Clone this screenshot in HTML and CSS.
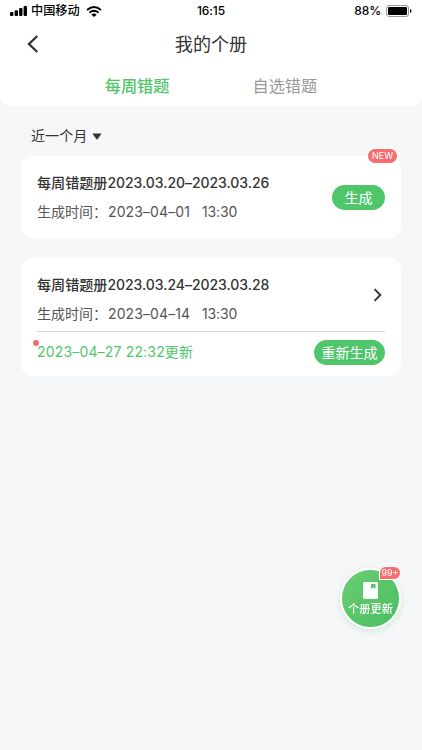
FILE: index.html
```html
<!DOCTYPE html>
<html lang="zh-CN">
<head>
<meta charset="utf-8">
<meta name="viewport" content="width=device-width, initial-scale=1">
<title>我的个册</title>
<link rel="stylesheet" href="styles.css">
</head>
<body>
<header class="header">
  <div class="status">
    <div class="carrier">
      <svg class="signal" viewBox="0 0 17 10"><rect x="0" y="6" width="3.4" height="4" rx="1"/><rect x="4.6" y="4.2" width="3.4" height="5.8" rx="1"/><rect x="9.1" y="2.1" width="3.4" height="7.9" rx="1"/><rect x="13.6" y="0" width="3.4" height="10" rx="1"/></svg>
      <span class="operator">中国移动</span>
      <svg class="wifi" viewBox="0 0 16 11"><path d="M1 4Q8-2 15 4M3.4 6.6Q8 2.8 12.6 6.6" fill="none" stroke="#000" stroke-width="1.8"/><path d="M5.3 8.4Q8 6.4 10.7 8.4L8 11Z"/></svg>
    </div>
    <span class="clock">16:15</span>
    <div class="power"><span class="percent">88%</span>
      <svg class="battery" viewBox="0 0 26 12"><rect x=".5" y=".5" width="22" height="11" rx="2.5" fill="#fff" stroke="#999"/><rect x="2" y="2" width="19" height="8" rx="1"/><path d="M24 4Q25.6 4.3 25.6 6T24 8Z"/></svg>
    </div>
  </div>
  <div class="navbar">
    <svg class="back" viewBox="0 0 12 18"><path d="M10.3 1L2 9L10.3 17"/></svg>
    <h1 class="page-title">我的个册</h1>
  </div>
  <nav class="tabs"><span class="tab tab-active">每周错题</span><span class="tab">自选错题</span></nav>
</header>
<main class="content">
  <div class="filter">近一个月<svg class="caret" viewBox="0 0 10 7"><path d="M1.3 1H8.7L5 5.8Z"/></svg></div>
  <section class="card card-new">
    <span class="badge-new">NEW</span>
    <div class="info">
      <h2 class="card-title">每周错题册<span class="title-range">2023.03.20–2023.03.26</span></h2>
      <p class="meta"><span class="label">生成时间：</span><span class="date">2023–04–01</span><span class="time">13:30</span></p>
    </div>
    <button class="button">生成</button>
  </section>
  <section class="card card-updated">
    <div class="summary">
      <div class="info">
        <h2 class="card-title">每周错题册<span class="title-range">2023.03.24–2023.03.28</span></h2>
        <p class="meta"><span class="label">生成时间：</span><span class="date">2023–04–14</span><span class="time">13:30</span></p>
      </div>
      <svg class="chevron" viewBox="0 0 9 14"><path d="M1.5 1.2L7.3 7L1.5 12.8"/></svg>
    </div>
    <div class="update"><span class="update-text">2023–04–27 22:32更新</span><button class="button button-wide">重新生成</button></div>
  </section>
</main>
<div class="fab">
  <span class="fab-badge">99+</span>
  <svg class="book" viewBox="0 0 15 17"><rect width="15" height="17" rx="1.5" fill="#fff"/><path d="M8 2H12.5V7L10.2 5.3L8 7Z" fill="#50c66b"/></svg>
  <span class="fab-label">个册更新</span>
</div>
</body>
</html>
```
FILE: styles.css
```css
* { box-sizing: border-box; }
body {
  margin: 0;
  min-height: 750px;
  background: #f6f7f9;
  color: #333;
  font-family: Inter, "Noto Sans CJK SC", sans-serif;
}
h1, h2, p { margin: 0; font-weight: 400; }
svg { display: block; flex: none; }
button { border: 0; padding: 0; font-family: inherit; }
.header { height: 106px; background: #fff; border-radius: 0 0 12px 12px; }
.status {
  display: grid;
  grid-template-columns: 1fr auto 1fr;
  align-items: center;
  height: 22px;
  padding: 0 10px;
  color: #000;
  font-size: 12px;
  line-height: 22px;
}
.carrier, .power { display: flex; align-items: center; }
.power { justify-content: flex-end; gap: 5px; }
.signal { width: 17px; height: 10px; }
.operator { margin-left: 4px; font-size: 12.2px; font-weight: 500; }
.wifi { width: 16px; height: 11px; margin-left: 6px; }
.clock { font-weight: 500; font-size: 12px; letter-spacing: -.1px; }
.percent { font-weight: 500; font-size: 12px; letter-spacing: -.1px; }
.battery { width: 26px; height: 12px; }
.navbar {
  display: grid;
  grid-template-columns: 1fr auto 1fr;
  align-items: center;
  height: 43px;
  padding: 0 27px;
}
.back { width: 12px; height: 18px; fill: none; stroke: #333; stroke-width: 2.3; }
.page-title { font-size: 18.1px; line-height: 26px; }
.tabs { display: flex; justify-content: center; gap: 83px; height: 41px; padding-top: 9px; }
.tab { color: #999; font-size: 16.2px; line-height: 24px; }
.tab-active { color: #50c66b; font-weight: 500; }
.content { padding: 20px 21px; }
.filter {
  display: flex;
  align-items: center;
  gap: 5px;
  height: 20px;
  margin-left: 10px;
  font-size: 14.1px;
  line-height: 20px;
}
.caret { width: 10px; height: 7px; fill: #333; stroke: #333; stroke-width: 1.2; stroke-linejoin: round; }
.card { position: relative; width: 380px; background: #fff; border-radius: 12px; padding: 0 16px; }
.card-new {
  display: flex;
  align-items: center;
  justify-content: space-between;
  height: 82px;
  margin-top: 10px;
}
.card-updated { height: 118px; margin-top: 20px; }
.summary {
  display: flex;
  align-items: flex-start;
  justify-content: space-between;
  height: 74px;
  padding: 17px 3px 0 0;
  border-bottom: 1px solid #d9d9d9;
}
.card-title { font-size: 14.1px; font-weight: 500; line-height: 20px; white-space: nowrap; }
.title-range { font-size: 14px; letter-spacing: -.05px; }
.meta { display: flex; margin-top: 9px; color: #555; font-size: 14px; line-height: 20px; }
.label { width: 71px; }
.date { width: 94px; letter-spacing: .1px; }
.time { letter-spacing: -.15px; }
.button {
  width: 53px;
  height: 25px;
  border-radius: 13px;
  background: #50c66b;
  color: #fff;
  font-size: 14.1px;
  line-height: 25px;
}
.button-wide { width: 71px; margin-bottom: 1px; }
.chevron { width: 9px; height: 14px; margin-top: 13px; fill: none; stroke: #333; stroke-width: 1.9; }
.badge-new {
  position: absolute;
  top: -7px;
  right: 4px;
  width: 29px;
  height: 14px;
  border-radius: 7px;
  background: #f56d6c;
  color: #fff;
  font-size: 9px;
  line-height: 14px;
  text-align: center;
}
.update { position: relative; display: flex; align-items: center; justify-content: space-between; height: 41px; }
.update::before {
  content: "";
  position: absolute;
  left: -4px;
  top: 8px;
  width: 6px;
  height: 6px;
  border-radius: 50%;
  background: #f56d6c;
}
.update-text { margin-bottom: 2px; color: #50c66b; font-size: 14px; line-height: 20px; letter-spacing: .17px; }
.fab {
  position: fixed;
  left: 340px;
  top: 568px;
  width: 61px;
  height: 61px;
  border: 2px solid #fff;
  border-radius: 50%;
  background: linear-gradient(135deg, #6ace72, #49be60);
  box-shadow: 0 2px 6px #50c66b40;
  display: flex;
  flex-direction: column;
  align-items: center;
  padding-top: 12px;
}
.book { width: 15px; height: 17px; }
.fab-label { margin-top: 1px; color: #fff; font-size: 11.2px; font-weight: 500; line-height: 18px; white-space: nowrap; }
.fab-badge {
  position: absolute;
  left: 37px;
  top: -4px;
  width: 22px;
  height: 14px;
  border: 1px solid #fff;
  border-radius: 7px 7px 7px 0;
  background: #f56d6c;
  color: #fff;
  font-size: 9px;
  line-height: 12px;
  text-align: center;
}
```
